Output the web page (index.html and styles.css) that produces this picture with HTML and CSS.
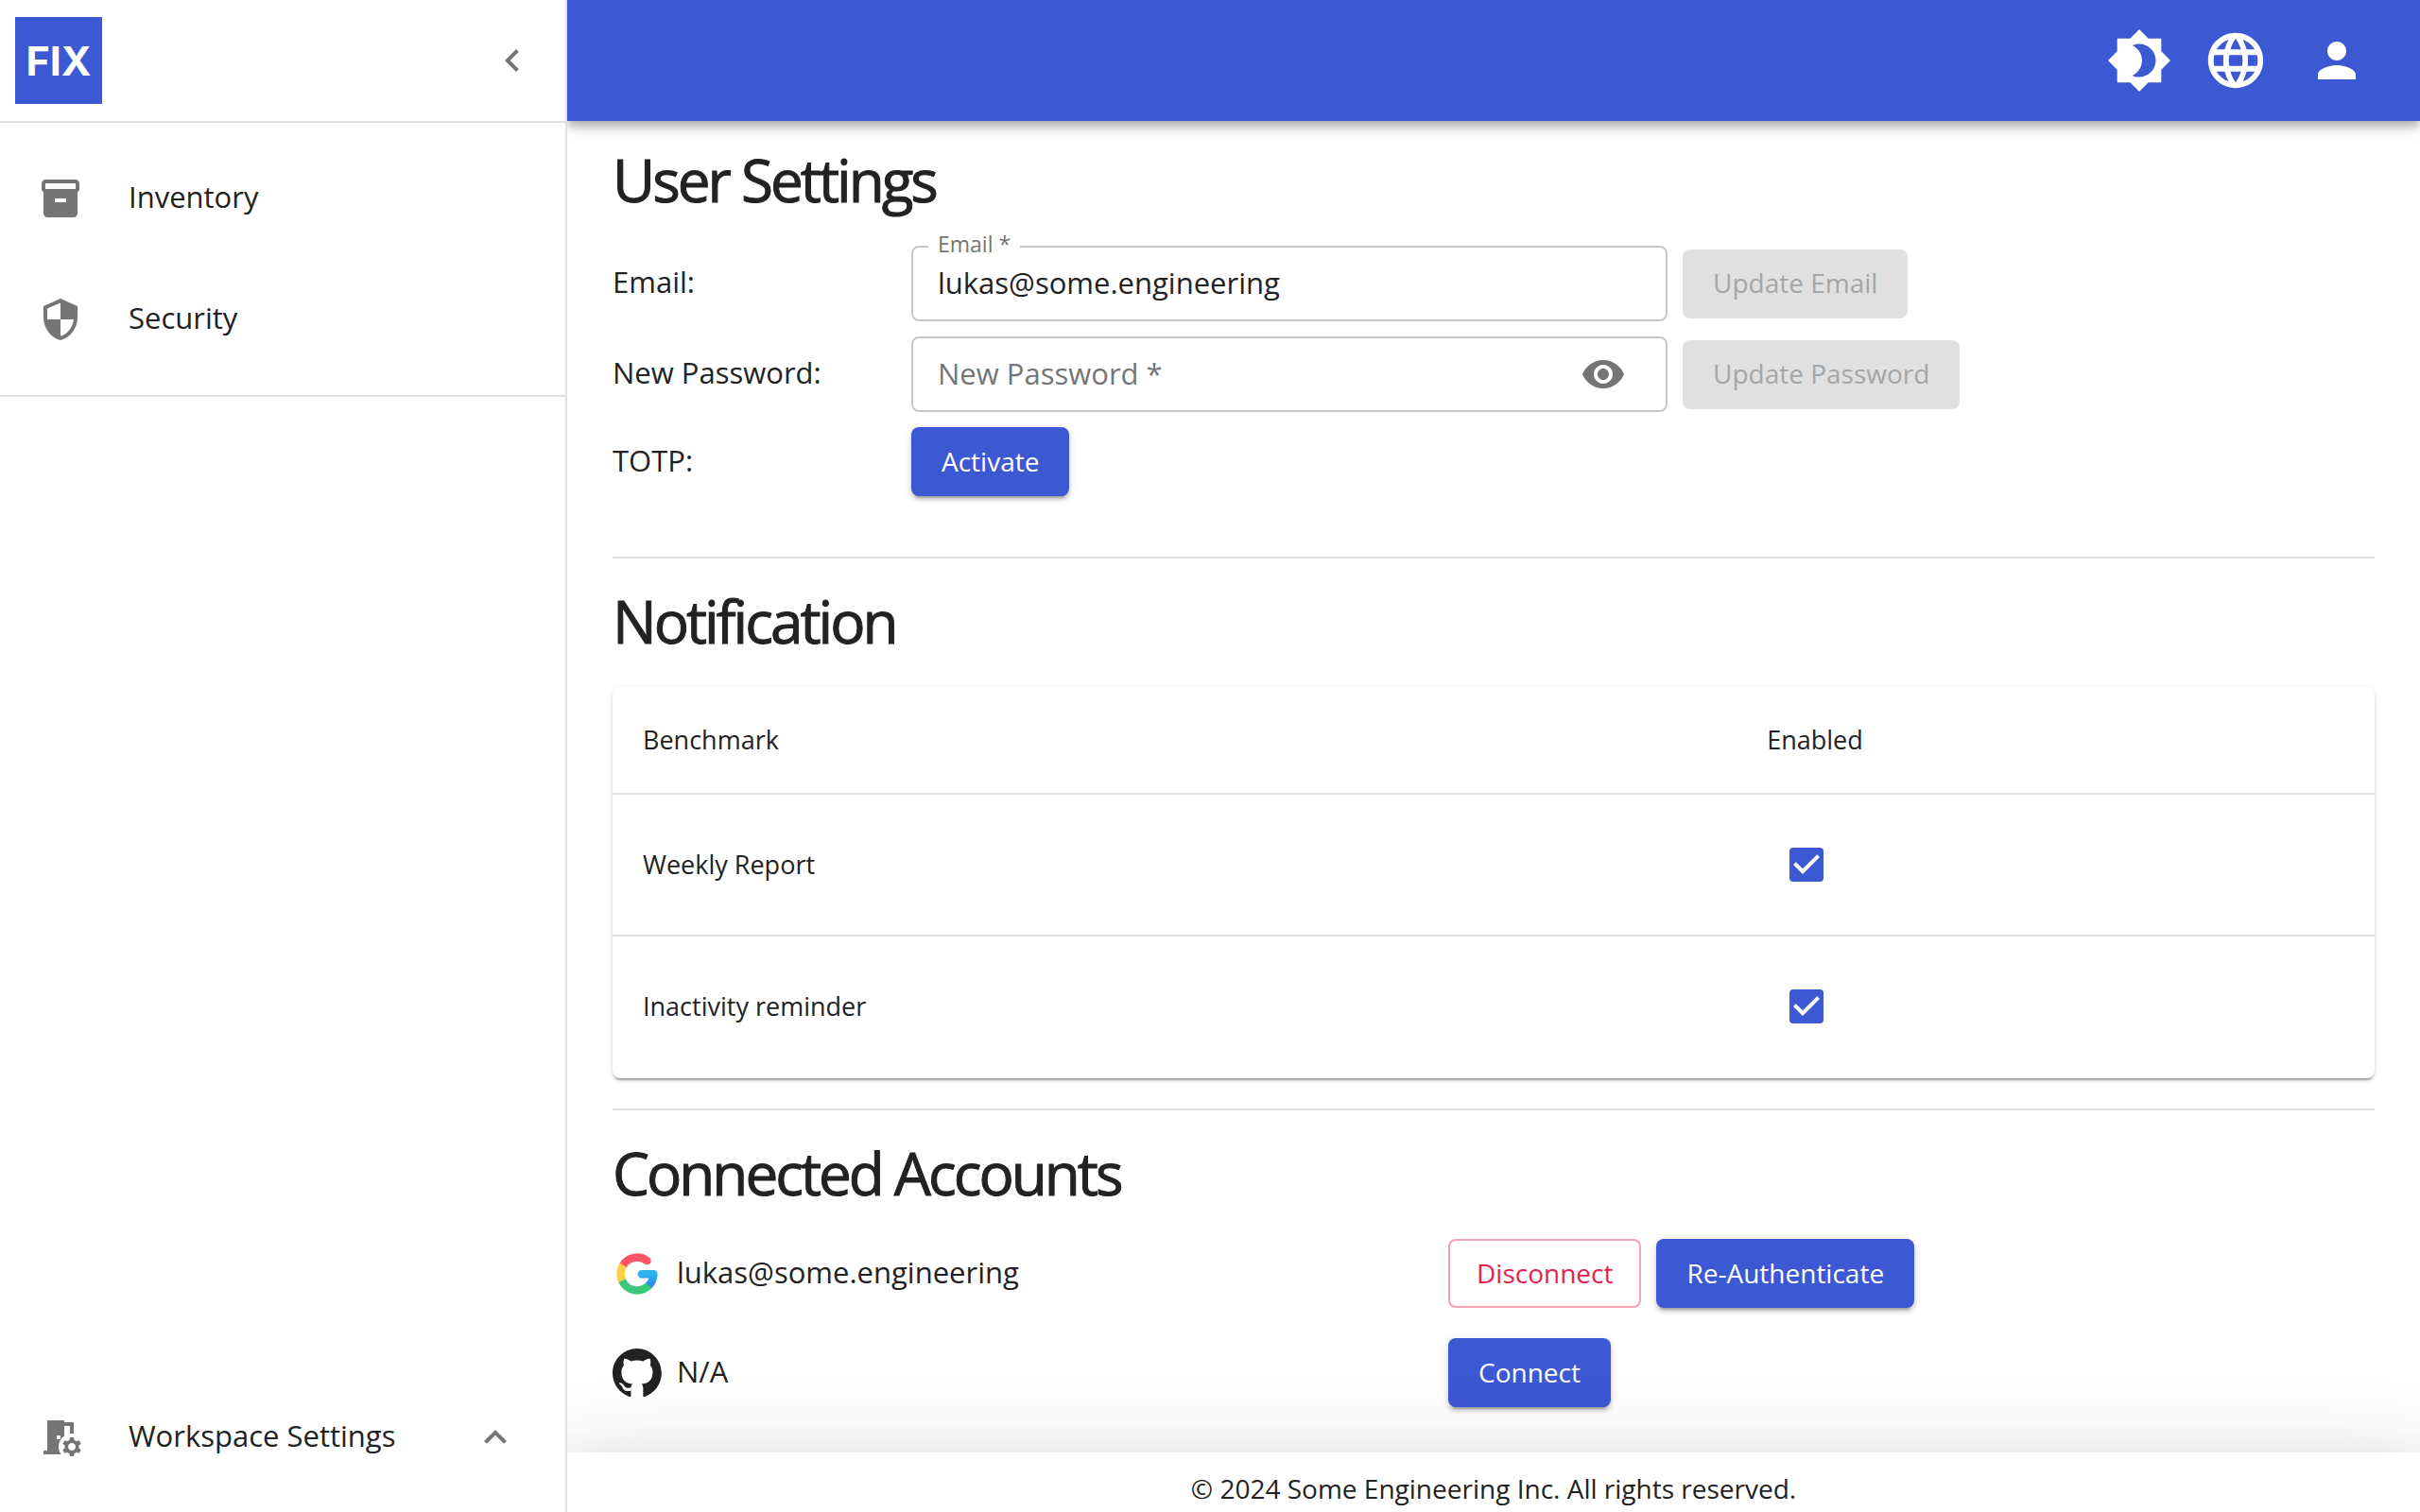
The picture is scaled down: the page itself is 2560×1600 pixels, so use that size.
FILE: index.html
```html
<!DOCTYPE html>
<html lang="en">
<head>
<meta charset="utf-8">
<title>User Settings</title>
<link rel="stylesheet" href="styles.css">
</head>
<body>
<div class="app">
  <aside class="sidebar">
    <div class="sidebar-head">
      <a class="logo" href="#" aria-label="Home">FIX</a>
      <button class="icon-button" type="button" aria-label="Collapse menu">
        <svg class="icon" viewBox="0 0 24 24"><path d="M15.41 7.41 14 6l-6 6 6 6 1.41-1.41L10.83 12z"/></svg>
      </button>
    </div>
    <nav class="nav">
      <a class="nav-item" href="#">
        <svg class="icon" viewBox="0 0 24 24"><path d="M20 2H4c-1 0-2 .9-2 2v3.01c0 .72.43 1.34 1 1.69V20c0 1.1 1.1 2 2 2h14c.9 0 2-.9 2-2V8.7c.57-.35 1-.97 1-1.69V4c0-1.1-1-2-2-2zm-5 12H9v-2h6v2zm5-7H4V4h16v3z"/></svg>
        <span class="nav-text">Inventory</span>
      </a>
      <a class="nav-item" href="#">
        <svg class="icon" viewBox="0 0 24 24"><path d="M12 1 3 5v6c0 5.55 3.84 10.74 9 12 5.16-1.26 9-6.45 9-12V5l-9-4zm0 10.99h7c-.53 4.12-3.28 7.79-7 8.94V12H5V6.3l7-3.11v8.8z"/></svg>
        <span class="nav-text">Security</span>
      </a>
    </nav>
    <nav class="nav nav-bottom">
      <a class="nav-item" href="#">
        <svg class="icon" viewBox="0 0 24 24"><path fill-rule="evenodd" d="M14 11.26V6h3v4h2V4h-5V3H5v16H3v2h9.26c-.79-1.13-1.26-2.51-1.26-4 0-2.38 1.19-4.47 3-5.74zM10 11h2v2h-2v-2z"/><path d="m21.69 16.37 1.14-1-1-1.73-1.45.49c-.32-.27-.68-.48-1.08-.63L19 12h-2l-.3 1.49c-.4.15-.76.36-1.08.63l-1.45-.49-1 1.73 1.14 1c-.08.5-.08.76 0 1.26l-1.14 1 1 1.73 1.45-.49c.32.27.68.48 1.08.63L17 22h2l.3-1.49c.4-.15.76-.36 1.08-.63l1.45.49 1-1.73-1.14-1c.08-.51.08-.77 0-1.27zM18 19c-1.1 0-2-.9-2-2s.9-2 2-2 2 .9 2 2-.9 2-2 2z"/></svg>
        <span class="nav-text">Workspace Settings</span>
        <svg class="icon" viewBox="0 0 24 24"><path d="m12 8-6 6 1.41 1.41L12 10.83l4.59 4.58L18 14z"/></svg>
      </a>
    </nav>
  </aside>

  <div class="page">
    <header class="appbar">
      <button class="icon-button" type="button" aria-label="Toggle theme">
        <svg class="icon icon-large" viewBox="0 0 24 24"><path d="M20 8.69V4h-4.69L12 .69 8.69 4H4v4.69L.69 12 4 15.31V20h4.69L12 23.31 15.31 20H20v-4.69L23.31 12 20 8.69zM12 18c-.89 0-1.74-.2-2.5-.55C11.56 16.5 13 14.42 13 12s-1.44-4.5-3.5-5.45C10.26 6.2 11.11 6 12 6c3.31 0 6 2.69 6 6s-2.69 6-6 6z"/></svg>
      </button>
      <button class="icon-button" type="button" aria-label="Language">
        <svg class="icon icon-large" viewBox="0 0 24 24"><path d="M11.99 2C6.47 2 2 6.48 2 12s4.47 10 9.99 10C17.52 22 22 17.52 22 12S17.52 2 11.99 2zm6.93 6h-2.95c-.32-1.25-.78-2.45-1.38-3.56 1.84.63 3.37 1.91 4.33 3.56zM12 4.04c.83 1.2 1.48 2.53 1.91 3.96h-3.82c.43-1.43 1.08-2.76 1.91-3.96zM4.26 14C4.1 13.36 4 12.69 4 12s.1-1.36.26-2h3.38c-.08.66-.14 1.32-.14 2 0 .68.06 1.34.14 2H4.26zm.82 2h2.95c.32 1.25.78 2.45 1.38 3.56-1.84-.63-3.37-1.9-4.33-3.56zm2.95-8H5.08c.96-1.66 2.49-2.93 4.33-3.56C8.81 5.55 8.35 6.75 8.03 8zM12 19.96c-.83-1.2-1.48-2.53-1.91-3.96h3.82c-.43 1.43-1.08 2.76-1.91 3.96zM14.34 14H9.66c-.09-.66-.16-1.32-.16-2 0-.68.07-1.35.16-2h4.68c.09.65.16 1.32.16 2 0 .68-.07 1.34-.16 2zm.25 5.56c.6-1.11 1.06-2.31 1.38-3.56h2.95c-.96 1.65-2.49 2.93-4.33 3.56zM16.36 14c.08-.66.14-1.32.14-2 0-.68-.06-1.34-.14-2h3.38c.16.64.26 1.31.26 2s-.1 1.36-.26 2h-3.38z"/></svg>
      </button>
      <button class="icon-button account-button" type="button" aria-label="Account">
        <svg class="icon icon-medium" viewBox="0 0 24 24"><path d="M12 12c2.21 0 4-1.79 4-4s-1.79-4-4-4-4 1.79-4 4 1.79 4 4 4zm0 2c-2.67 0-8 1.34-8 4v2h16v-2c0-2.66-5.33-4-8-4z"/></svg>
      </button>
    </header>

    <main class="content">
      <section class="section">
        <h1 class="title">User Settings</h1>
        <form class="settings">
          <div class="settings-row">
            <span class="settings-name">Email:</span>
            <div class="field">
              <label class="field-label" for="email">Email *</label>
              <input class="field-input" id="email" type="email" value="lukas@some.engineering">
            </div>
            <button class="button button-disabled" type="submit" disabled>Update Email</button>
          </div>
          <div class="settings-row">
            <label class="settings-name" for="password">New Password:</label>
            <div class="field">
              <input class="field-input" id="password" type="password" placeholder="New Password *">
              <button class="icon-button" type="button" aria-label="Show password">
                <svg class="icon" viewBox="0 0 24 24"><path d="M12 4.5C7 4.5 2.73 7.61 1 12c1.73 4.39 6 7.5 11 7.5s9.27-3.11 11-7.5c-1.73-4.39-6-7.5-11-7.5zM12 17c-2.76 0-5-2.24-5-5s2.24-5 5-5 5 2.24 5 5-2.24 5-5 5zm0-8c-1.66 0-3 1.34-3 3s1.34 3 3 3 3-1.34 3-3-1.34-3-3-3z"/></svg>
              </button>
            </div>
            <button class="button button-disabled" type="submit" disabled>Update Password</button>
          </div>
          <div class="settings-row">
            <span class="settings-name">TOTP:</span>
            <div><button class="button button-primary" type="button">Activate</button></div>
          </div>
        </form>
      </section>

      <section class="section section-table">
        <h2 class="title">Notification</h2>
        <table class="table">
          <thead>
            <tr><th class="col-name" scope="col">Benchmark</th><th scope="col">Enabled</th></tr>
          </thead>
          <tbody>
            <tr>
              <td><label for="weekly">Weekly Report</label></td>
              <td><input class="checkbox" id="weekly" type="checkbox" checked></td>
            </tr>
            <tr>
              <td><label for="inactivity">Inactivity reminder</label></td>
              <td><input class="checkbox" id="inactivity" type="checkbox" checked></td>
            </tr>
          </tbody>
        </table>
      </section>

      <section class="section">
        <h2 class="title">Connected Accounts</h2>
        <div class="accounts">
          <div class="account">
            <div class="account-name">
              <svg class="brand brand-google" viewBox="0 0 52 52">
                <defs>
                  <linearGradient id="google-blue" x1="0" y1="0" x2="0" y2="1"><stop offset="0" stop-color="#2fb4f2"/><stop offset="1" stop-color="#2a8be8"/></linearGradient>
                </defs>
                <path stroke="#ff5565" stroke-linecap="round" d="M11.2 16.8A17.400 17.400 0 0 1 36.500 12.100"/>
                <path stroke="url(#google-blue)" stroke-linecap="round" stroke-linejoin="round" d="M30.800 26.200H43.400A17.400 17.400 0 0 1 38.300 38.300"/>
                <path stroke="#ffd03f" d="M10.100 33.100A17.400 17.400 0 0 1 11.200 16.800"/>
                <path stroke="#3ac978" d="M38.300 38.300A17.400 17.400 0 0 1 10.100 33.100"/>
              </svg>
              <span class="account-text">lukas@some.engineering</span>
            </div>
            <div class="account-actions">
              <button class="button button-outline" type="button">Disconnect</button>
              <button class="button button-primary" type="button">Re-Authenticate</button>
            </div>
          </div>
          <div class="account">
            <div class="account-name">
              <svg class="brand" viewBox="0 0 98 98"><path d="M48.854 0C21.839 0 0 22 0 49.217c0 21.756 13.993 40.172 33.405 46.690 2.427.490 3.316-1.059 3.316-2.362 0-1.141-.080-5.052-.080-9.127-13.590 2.934-16.420-5.867-16.420-5.867-2.184-5.704-5.420-7.170-5.420-7.170-4.448-3.015.324-3.015.324-3.015 4.934.326 7.523 5.052 7.523 5.052 4.367 7.496 11.404 5.378 14.235 4.074.404-3.178 1.699-5.378 3.074-6.600-10.839-1.141-22.243-5.378-22.243-24.283 0-5.378 1.940-9.778 5.014-13.200-.485-1.222-2.184-6.275.486-13.038 0 0 4.125-1.304 13.426 5.052a46.970 46.970 0 0 1 12.214-1.630c4.125 0 8.330.571 12.213 1.630 9.302-6.356 13.427-5.052 13.427-5.052 2.670 6.763.970 11.816.485 13.038 3.155 3.422 5.015 7.822 5.015 13.200 0 18.905-11.404 23.060-22.324 24.283 1.780 1.548 3.316 4.481 3.316 9.126 0 6.600-.080 11.897-.080 13.526 0 1.304.890 2.853 3.316 2.364 19.412-6.520 33.405-24.935 33.405-46.691C97.707 22 75.788 0 48.854 0z"/></svg>
              <span class="account-text">N/A</span>
            </div>
            <div class="account-actions">
              <button class="button button-primary" type="button">Connect</button>
            </div>
          </div>
        </div>
      </section>
    </main>

    <footer class="footer">© 2024 Some Engineering Inc. All rights reserved.</footer>
  </div>
</div>
</body>
</html>
```
FILE: styles.css
```css
:root {
  --blue: #3d58d3;
  --text: #222;
  --muted: #757575;
  --line: #e0e0e0;
}

* {
  box-sizing: border-box;
}

body {
  margin: 0;
  background: #fff;
  color: var(--text);
  font-family: "Open Sans", "Noto Sans", sans-serif;
  font-size: 31px;
  line-height: 48px;
}

button,
input {
  font: inherit;
  color: inherit;
}

.app {
  display: flex;
  min-height: 100vh;
}

/* Sidebar */

.sidebar {
  display: flex;
  flex-direction: column;
  flex: 0 0 600px;
  position: relative;
  z-index: 2;
  background: #fff;
  border-right: 2px solid var(--line);
}

.sidebar-head {
  display: flex;
  align-items: center;
  justify-content: space-between;
  height: 130px;
  padding: 0 16px;
  border-bottom: 2px solid var(--line);
}

.logo {
  display: flex;
  align-items: center;
  justify-content: center;
  width: 92px;
  height: 92px;
  background: var(--blue);
  color: #fff;
  font-family: Inter, "Liberation Sans", sans-serif;
  font-size: 43px;
  font-weight: 700;
  text-decoration: none;
}

.nav {
  padding: 16px 0;
  border-bottom: 2px solid var(--line);
}

.nav-bottom {
  margin-top: auto;
  border-bottom: 0;
}

.nav-item {
  display: flex;
  align-items: center;
  gap: 48px;
  height: 128px;
  padding: 0 50px 0 40px;
  color: var(--text);
  text-decoration: none;
}

.nav-text {
  flex: 1;
}

.nav-text,
.settings-name,
.account-text {
  padding-bottom: 4px;
}

.icon {
  display: block;
  flex: none;
  width: 48px;
  height: 48px;
  fill: var(--muted);
}

.icon-button {
  display: block;
  padding: 16px;
  border: 0;
  background: none;
}

/* Main column */

.page {
  display: flex;
  flex-direction: column;
  flex: 1;
  min-width: 0;
}

.appbar {
  display: flex;
  align-items: center;
  justify-content: flex-end;
  height: 128px;
  padding-right: 42px;
  background: var(--blue);
  box-shadow: 0 4px 8px -2px rgba(0, 0, 0, .2), 0 8px 10px rgba(0, 0, 0, .14), 0 2px 20px rgba(0, 0, 0, .12);
}

.appbar .icon {
  fill: #fff;
}

.icon-large {
  width: 70px;
  height: 70px;
}

.icon-medium {
  width: 60px;
  height: 60px;
}

.account-button {
  margin-left: 10px;
}

.content {
  flex: 1;
  padding: 24px 48px 48px;
}

.section + .section {
  margin-top: 64px;
  padding-top: 28px;
  border-top: 2px solid var(--line);
}

.section-table + .section {
  margin-top: 32px;
}

.title {
  margin: 0 0 32px;
  font-size: 62px;
  font-weight: 500;
  line-height: 76px;
  letter-spacing: -3px;
  -webkit-text-stroke: 1px currentColor;
}

.settings,
.accounts {
  display: grid;
  gap: 16px;
}

.accounts {
  gap: 32px;
}

.settings-row {
  display: grid;
  grid-template-columns: 300px 800px max-content;
  column-gap: 16px;
  align-items: center;
}

.field {
  display: flex;
  align-items: center;
  position: relative;
  height: 80px;
  padding-right: 26px;
  border: 2px solid #c8c8c8;
  border-radius: 8px;
}

.field-label {
  position: absolute;
  top: -20px;
  left: 16px;
  padding: 0 10px;
  background: #fff;
  color: var(--muted);
  font-size: 23px;
  line-height: 32px;
}

.field-input {
  flex: 1;
  min-width: 0;
  padding: 0 0 2px 26px;
  border: 0;
  outline: 0;
  background: none;
}

.field-input::placeholder {
  color: var(--muted);
  opacity: 1;
}

.button {
  height: 73px;
  padding: 0 32px 2px;
  border: 0;
  border-radius: 8px;
  font-size: 28px;
  font-weight: 500;
}

.button-primary {
  background: var(--blue);
  color: #fff;
  box-shadow: 0 6px 2px -4px rgba(0, 0, 0, .2), 0 4px 4px rgba(0, 0, 0, .14), 0 2px 10px rgba(0, 0, 0, .12);
}

.button-disabled {
  background: #e0e0e0;
  color: #a6a6a6;
}

.button-outline {
  padding: 0 28px 2px;
  border: 2px solid #f9a0b3;
  background: none;
  color: #e91e50;
}

/* Notification table */

.table {
  width: 100%;
  border-spacing: 0;
  border-radius: 8px;
  box-shadow: 0 4px 2px -2px rgba(0, 0, 0, .2), 0 2px 2px rgba(0, 0, 0, .14), 0 2px 6px rgba(0, 0, 0, .12);
  font-size: 27px;
}

.table th,
.table td {
  height: 150px;
  padding: 0 32px;
  border-bottom: 2px solid var(--line);
  text-align: left;
}

.table th {
  height: 114px;
  font-weight: 500;
}

.table tr:last-child td {
  border-bottom-color: transparent;
}

.col-name {
  width: 63.8%;
}

.checkbox {
  appearance: none;
  display: block;
  width: 36px;
  height: 36px;
  margin: 0 0 0 24px;
  border-radius: 4px;
  background: var(--blue) url("data:image/svg+xml,%3Csvg xmlns='http://www.w3.org/2000/svg' viewBox='3 3 18 18'%3E%3Cpath fill='%23fff' d='M10 17l-5-5 1.410-1.410L10 14.170l7.590-7.590L19 8z'/%3E%3C/svg%3E");
}

/* Connected accounts */

.account {
  display: grid;
  grid-template-columns: 884px max-content;
  align-items: center;
}

.account-name,
.account-actions {
  display: flex;
  align-items: center;
  gap: 16px;
}

.brand {
  width: 52px;
  height: 52px;
  fill: var(--text);
}

.brand-google {
  fill: none;
  stroke-width: 8.4;
}

.footer {
  padding: 14px 0 2px;
  background: #fff;
  box-shadow: 0 22px 30px -14px rgba(0, 0, 0, .2), 0 48px 76px 6px rgba(0, 0, 0, .14), 0 18px 92px 16px rgba(0, 0, 0, .12);
  font-size: 28px;
  text-align: center;
}
```
